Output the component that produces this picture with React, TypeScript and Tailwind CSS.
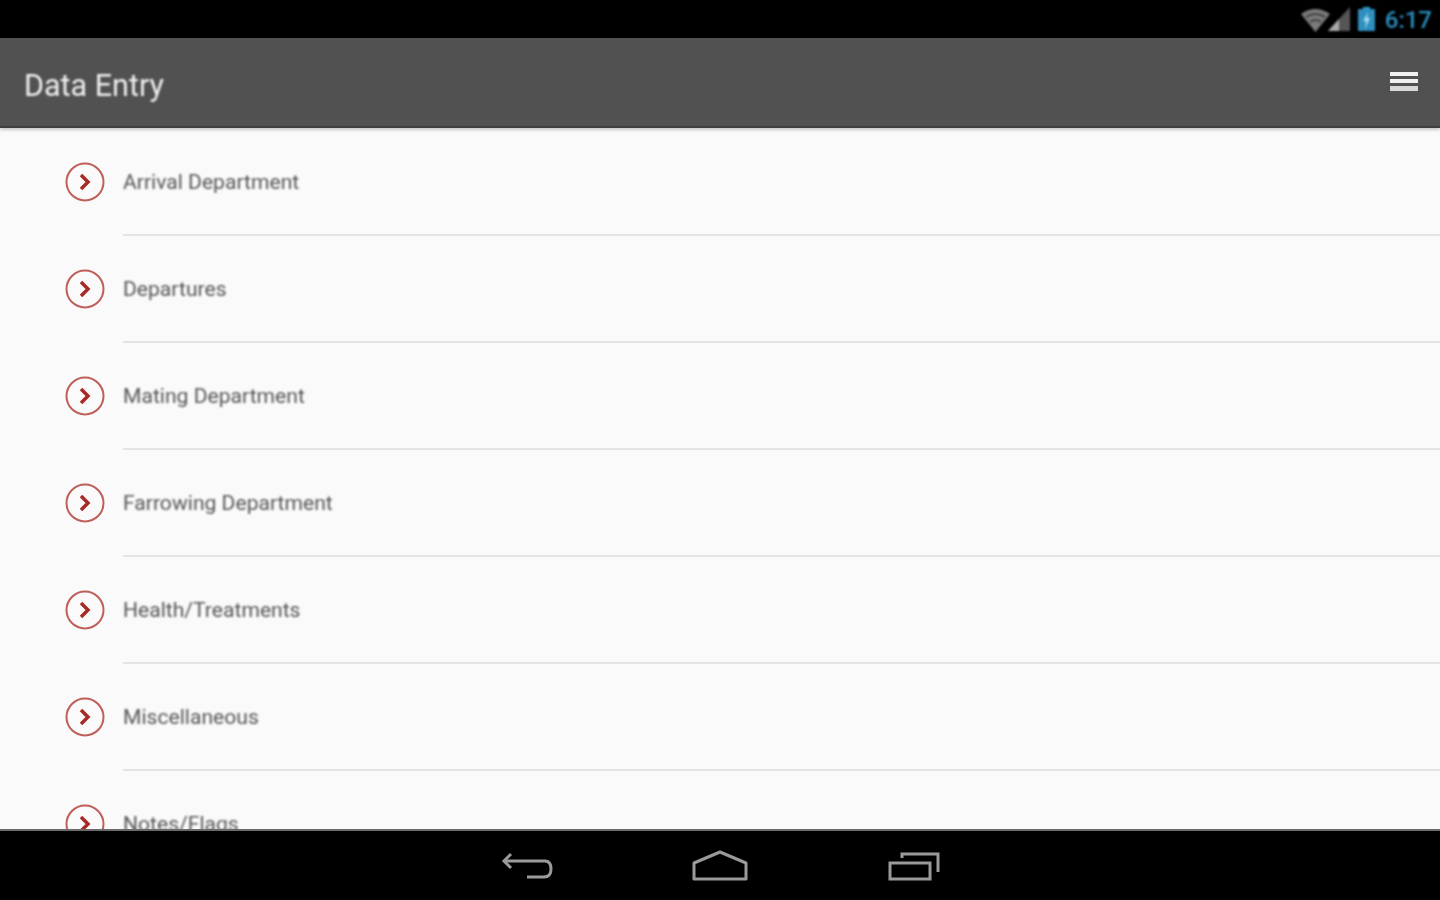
const ITEMS = [
  'Arrival Department',
  'Departures',
  'Mating Department',
  'Farrowing Department',
  'Health/Treatments',
  'Miscellaneous',
  'Notes/Flags',
]

function ChevronCircle() {
  return (
    <svg width="40" height="40" viewBox="0 0 40 40" fill="none" className="shrink-0 blur-[0.6px]">
      <circle cx="20" cy="20" r="18.5" stroke="#bf5f5a" strokeWidth="2" />
      <path d="M16 13 L23 20 L16 27" stroke="#a82a26" strokeWidth="3.5" />
    </svg>
  )
}

function StatusIcons() {
  return (
    <svg width="78" height="28" viewBox="0 0 78 28" fill="none" className="shrink-0 blur-[0.8px]">
      {/* wifi */}
      <path d="M2 9 Q16 -1 31 9 L16.5 27 Z" fill="#7a7a7a" />
      <path d="M7 12 Q16.5 6 26 12" stroke="#333333" strokeWidth="1.5" />
      <path d="M11 17 Q16.5 13 22 17" stroke="#333333" strokeWidth="1.5" />
      {/* signal */}
      <path d="M29 26 L51 2 L51 26 Z" fill="#555555" />
      <path d="M29 26 L40 14 L40 26 Z" fill="#aaaaaa" />
      {/* battery */}
      <rect x="64" y="2" width="7" height="3" fill="#2f9fd0" />
      <rect x="59" y="4" width="17" height="22" rx="1" fill="#2f8fbf" />
      <path d="M69 7 L64 16 L67 16 L66 24 L71 13 L68 13 Z" fill="#a8dcf0" />
    </svg>
  )
}

function BackIcon() {
  return (
    <svg width="52" height="32" viewBox="0 0 52 32" fill="none" stroke="#9a9a9a" strokeWidth="3" className="blur-[0.5px]">
      <path d="M10 4 L3 11 L10 18" />
      <path d="M3 11 H44 Q50 11 50 19 Q50 27 43 27 H26" />
    </svg>
  )
}

function HomeIcon() {
  return (
    <svg width="58" height="32" viewBox="0 0 58 32" fill="none" stroke="#9a9a9a" strokeWidth="3" className="blur-[0.5px]">
      <path d="M3 29 V13 L29 2 L55 13 V29 Z" strokeLinejoin="round" />
    </svg>
  )
}

function RecentsIcon() {
  return (
    <svg width="54" height="32" viewBox="0 0 54 32" fill="none" stroke="#9a9a9a" strokeWidth="3" className="blur-[0.5px]">
      <rect x="3" y="13" width="40" height="16" />
      <path d="M15 8 V4 H51 V22" />
    </svg>
  )
}

export default function App() {
  return (
    <div className="h-screen w-full flex flex-col overflow-hidden bg-[#fafafa] font-['Roboto',sans-serif]">
      {/* status bar */}
      <div className="h-[38px] shrink-0 bg-black flex items-center justify-end pr-[8px] gap-[8px]">
        <StatusIcons />
        <span className="text-[24px] leading-none font-medium text-[#2a8fc0] blur-[0.8px] pt-[2px]">6:17</span>
      </div>

      {/* action bar */}
      <div className="h-[90px] shrink-0 bg-[#515151] border-b-2 border-[#3f3f3f] flex items-center justify-between pl-[24px] pr-[22px] shadow-[0_2px_3px_rgba(0,0,0,0.2)] relative z-10">
        <h1 className="text-[30.5px] leading-none font-normal text-[#f0f0f0] blur-[0.8px] pt-[8px]">Data Entry</h1>
        <div className="flex flex-col gap-[3px] mb-[2px] blur-[0.6px]">
          <span className="block w-[28px] h-[4px] bg-[#f0f0f0]" />
          <span className="block w-[28px] h-[4px] bg-[#f0f0f0]" />
          <span className="block w-[28px] h-[5px] bg-[#d8d8d8]" />
        </div>
      </div>

      {/* list */}
      <div className="flex-1 min-h-0 overflow-hidden pt-[1px]">
        {ITEMS.map((label) => (
          <div key={label} className="h-[107px] flex pl-[65px]">
            <div className="pt-[33px] w-[58px] shrink-0">
              <ChevronCircle />
            </div>
            <div className="flex-1 border-b-2 border-[#e4e4e4] pt-[39px]">
              <span className="block text-[21.1px] leading-[28px] text-[#555555] blur-[0.8px]">{label}</span>
            </div>
          </div>
        ))}
      </div>

      {/* nav bar */}
      <div className="h-[71px] shrink-0 bg-black border-t-2 border-[#6a6a6a] flex items-center justify-center gap-[138px] pl-[2px] pt-[1px]">
        <BackIcon />
        <HomeIcon />
        <RecentsIcon />
      </div>
    </div>
  )
}
